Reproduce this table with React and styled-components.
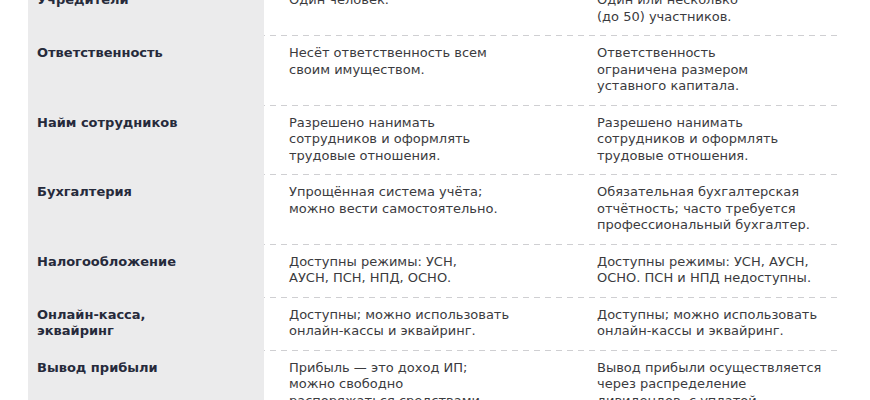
import styled, { createGlobalStyle } from "styled-components";

const GlobalStyle = createGlobalStyle`
  html, body {
    margin: 0;
    padding: 0;
    background: #ffffff;
  }
  body {
    font-family: "DejaVu Sans", "Noto Sans", sans-serif;
    overflow: hidden;
  }
`;

const rows = [
  {
    label: ["Учредители"],
    ip: ["Один человек."],
    ooo: ["Один или несколько", "(до 50) участников."],
  },
  {
    label: ["Ответственность"],
    ip: ["Несёт ответственность всем", "своим имуществом."],
    ooo: ["Ответственность", "ограничена размером", "уставного капитала."],
  },
  {
    label: ["Найм сотрудников"],
    ip: ["Разрешено нанимать", "сотрудников и оформлять", "трудовые отношения."],
    ooo: ["Разрешено нанимать", "сотрудников и оформлять", "трудовые отношения."],
  },
  {
    label: ["Бухгалтерия"],
    ip: ["Упрощённая система учёта;", "можно вести самостоятельно."],
    ooo: [
      "Обязательная бухгалтерская",
      "отчётность; часто требуется",
      "профессиональный бухгалтер.",
    ],
  },
  {
    label: ["Налогообложение"],
    ip: ["Доступны режимы: УСН,", "АУСН, ПСН, НПД, ОСНО."],
    ooo: ["Доступны режимы: УСН, АУСН,", "ОСНО. ПСН и НПД недоступны."],
  },
  {
    label: ["Онлайн-касса,", "эквайринг"],
    ip: ["Доступны; можно использовать", "онлайн-кассы и эквайринг."],
    ooo: ["Доступны; можно использовать", "онлайн-кассы и эквайринг."],
  },
  {
    label: ["Вывод прибыли"],
    ip: ["Прибыль — это доход ИП;", "можно свободно", "распоряжаться средствами."],
    ooo: [
      "Вывод прибыли осуществляется",
      "через распределение",
      "дивидендов, с уплатой",
      "налога.",
    ],
  },
];

// keeps the line breaks of the original table
const Lines = ({ lines }) =>
  lines.map((line, i) => (
    <span key={i}>
      {line}
      {i < lines.length - 1 && <br />}
    </span>
  ));

const App = () => {
  return (
    <>
      <GlobalStyle />
      <Table>
        {rows.map((row, i) => (
          <Row key={i} $first={i === 0}>
            <LabelCell>
              <Lines lines={row.label} />
            </LabelCell>
            <Cell>
              <Lines lines={row.ip} />
            </Cell>
            <Cell>
              <Lines lines={row.ooo} />
            </Cell>
          </Row>
        ))}
      </Table>
    </>
  );
};

const Table = styled.div`
  width: 814px;
  margin: -18px 0 0 28px;
  display: flex;
  flex-direction: column;
`;

const Row = styled.div`
  display: grid;
  grid-template-columns: 236px 308px 270px;
  background-image: ${({ $first }) =>
    $first
      ? "none"
      : "linear-gradient(to right, #cfcfd2 55%, transparent 55%)"};
  background-size: 11px 1px;
  background-repeat: repeat-x;
  background-position: 0 0;
`;

const LabelCell = styled.div`
  background: #ebebec;
  padding: 10px 9px;
  font-size: 13px;
  line-height: 16.5px;
  font-weight: 700;
  color: #262a3b;
  white-space: nowrap;
`;

const Cell = styled.div`
  padding: 10px 0 10px 25px;
  font-size: 13px;
  line-height: 16.5px;
  color: #3b3b3e;
  white-space: nowrap;
`;

export default App;
